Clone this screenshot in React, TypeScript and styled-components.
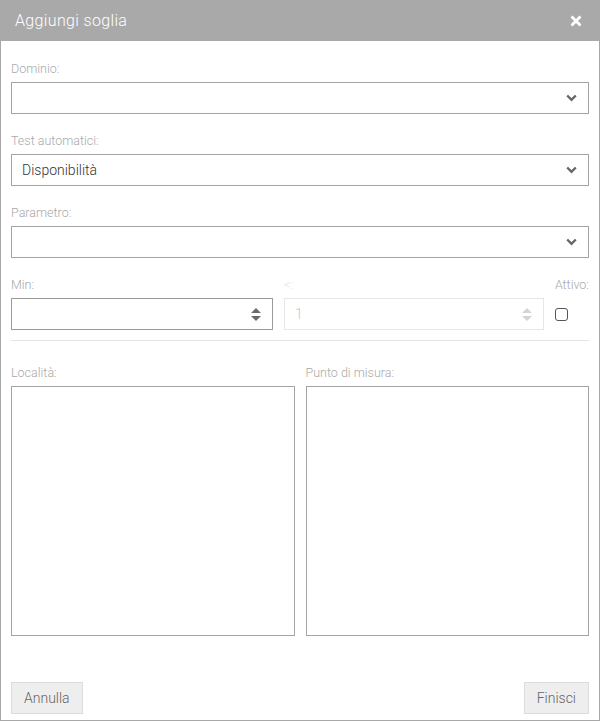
import React from 'react'
import styled, { createGlobalStyle } from 'styled-components'

const GlobalStyle = createGlobalStyle`
  html, body {
    margin: 0;
    padding: 0;
    background: #fff;
  }
  body {
    font-family: Roboto, "Liberation Sans", Arial, sans-serif;
  }
  * {
    box-sizing: border-box;
  }
`

const Modal = styled.div`
  width: 600px;
  height: 721px;
  border: 1px solid #a8a8a8;
  border-top: none;
  display: flex;
  flex-direction: column;
  background: #fff;
`

const Header = styled.div`
  height: 41px;
  margin: 0 -1px;
  background: #a9a9a9;
  display: flex;
  align-items: center;
  justify-content: space-between;
  padding: 0 16px 0 15px;
  color: #fff;
`

const Title = styled.div`
  font-size: 16px;
  font-weight: 300;
  letter-spacing: 0.35px;
`

const CloseButton = styled.div`
  display: flex;
  align-items: center;
  width: 14px;
  height: 14px;
`

const Body = styled.div`
  flex: 1;
  display: flex;
  flex-direction: column;
  padding: 21px 10px 6px 10px;
`

const Field = styled.div`
  display: flex;
  flex-direction: column;
  margin-bottom: 20px;
`

const Label = styled.div<{ $faint?: boolean; $right?: boolean }>`
  font-size: 12.5px;
  font-weight: 300;
  line-height: 14px;
  color: ${p => (p.$faint ? '#e6e6e6' : '#a9a9a9')};
  text-align: ${p => (p.$right ? 'right' : 'left')};
  margin-bottom: 6px;
  white-space: nowrap;
`

const SelectBox = styled.div`
  height: 32px;
  border: 1px solid #a4a4a4;
  display: flex;
  align-items: center;
  justify-content: space-between;
  padding: 0 11px 0 10px;
  font-size: 14px;
  font-weight: 300;
  color: #333;
`

const NumberRow = styled.div`
  display: grid;
  grid-template-columns: 262px 1fr auto;
  column-gap: 11px;
`

const NumberBox = styled.div<{ $disabled?: boolean }>`
  height: 32px;
  border: 1px solid ${p => (p.$disabled ? '#e6e6e6' : '#9a9a9a')};
  display: flex;
  align-items: center;
  justify-content: space-between;
  padding: 0 11px 0 10px;
  font-size: 14px;
  font-weight: 300;
  color: ${p => (p.$disabled ? '#c8c8c8' : '#333')};
`

const Spinner = styled.div<{ $disabled?: boolean }>`
  display: flex;
  flex-direction: column;
  gap: 3px;
  color: ${p => (p.$disabled ? '#d4d4d4' : '#6a6a6a')};
`

const CheckCell = styled.div`
  height: 32px;
  display: flex;
  align-items: center;
`

const Checkbox = styled.div`
  width: 13px;
  height: 13px;
  border: 1.5px solid #555;
  border-radius: 3px;
`

const Divider = styled.div`
  height: 1px;
  background: #e5e5e5;
  margin: 10px 0 25px;
`

const Lists = styled.div`
  display: grid;
  grid-template-columns: 1fr 1fr;
  column-gap: 11px;
`

const ListColumn = styled.div`
  display: flex;
  flex-direction: column;
`

const ListBox = styled.div`
  height: 250px;
  border: 1px solid #a4a4a4;
`

const Footer = styled.div`
  margin-top: auto;
  display: flex;
  justify-content: space-between;
  align-items: flex-end;
`

const Button = styled.button`
  height: 32px;
  padding: 0 12px;
  background: #eee;
  border: 1px solid #dcdcdc;
  color: #666;
  font-family: Roboto, "Liberation Sans", Arial, sans-serif;
  font-size: 14px;
  font-weight: 300;
`

const Chevron = () => (
  <svg width="11" height="8" viewBox="0 0 11 8">
    <path d="M1.2 1.5 L5.5 5.8 L9.8 1.5" fill="none" stroke="#666" strokeWidth="2.4" />
  </svg>
)

const Close = () => (
  <svg width="12" height="12" viewBox="0 0 12 12">
    <path d="M1.5 1.5 L10.5 10.5 M10.5 1.5 L1.5 10.5" stroke="#fff" strokeWidth="2.8" />
  </svg>
)

const Arrows = ({ disabled }: { disabled?: boolean }) => (
  <Spinner $disabled={disabled}>
    <svg width="10" height="5" viewBox="0 0 10 5">
      <path d="M0 5 L5 0 L10 5 Z" fill="currentColor" />
    </svg>
    <svg width="10" height="5" viewBox="0 0 10 5">
      <path d="M0 0 L5 5 L10 0 Z" fill="currentColor" />
    </svg>
  </Spinner>
)

const selects = [
  { label: 'Dominio:', value: '' },
  { label: 'Test automatici:', value: 'Disponibilità' },
  { label: 'Parametro:', value: '' },
]

export default function App() {
  return (
    <>
      <GlobalStyle />
      <Modal>
        <Header>
          <Title>Aggiungi soglia</Title>
          <CloseButton>
            <Close />
          </CloseButton>
        </Header>
        <Body>
          {selects.map(s => (
            <Field key={s.label}>
              <Label>{s.label}</Label>
              <SelectBox>
                <span>{s.value}</span>
                <Chevron />
              </SelectBox>
            </Field>
          ))}

          <NumberRow>
            <Label>Min:</Label>
            <Label $faint>&lt;:</Label>
            <Label $right>Attivo:</Label>
            <NumberBox>
              <span />
              <Arrows />
            </NumberBox>
            <NumberBox $disabled>
              <span>1</span>
              <Arrows disabled />
            </NumberBox>
            <CheckCell>
              <Checkbox />
            </CheckCell>
          </NumberRow>

          <Divider />

          <Lists>
            <ListColumn>
              <Label>Località:</Label>
              <ListBox />
            </ListColumn>
            <ListColumn>
              <Label>Punto di misura:</Label>
              <ListBox />
            </ListColumn>
          </Lists>

          <Footer>
            <Button>Annulla</Button>
            <Button>Finisci</Button>
          </Footer>
        </Body>
      </Modal>
    </>
  )
}
